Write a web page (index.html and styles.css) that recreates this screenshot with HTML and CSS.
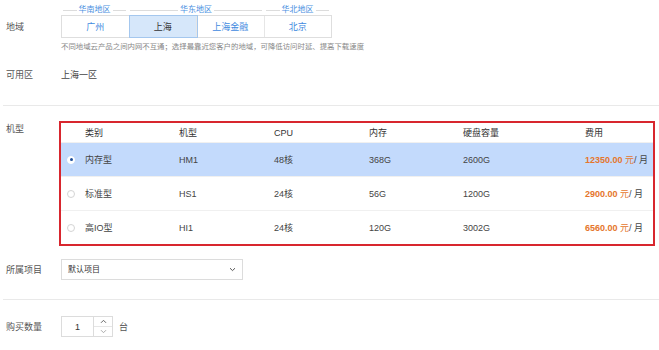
FILE: index.html
```html
<!DOCTYPE html>
<html>
<head>
  <meta charset="UTF-8">
  <title>购买云服务器</title>
  <link rel="stylesheet" href="styles.css">
</head>
<body>
  <div class="field field-region">
    <div class="field-label label-region">地域</div>
    <div class="field-body">
      <div class="region-groups">
        <div class="region-group w1"><span class="rule"></span><span class="region-name">华南地区</span><span class="rule"></span></div>
        <div class="region-group w2"><span class="rule"></span><span class="region-name">华东地区</span><span class="rule"></span></div>
        <div class="region-group w1"><span class="rule"></span><span class="region-name">华北地区</span><span class="rule"></span></div>
      </div>
      <div class="tabs">
        <div class="tab">广州</div>
        <div class="tab active">上海</div>
        <div class="tab">上海金融</div>
        <div class="tab">北京</div>
      </div>
      <p class="hint">不同地域云产品之间内网不互通；选择最靠近您客户的地域，可降低访问时延、提高下载速度</p>
    </div>
  </div>

  <div class="field field-zone">
    <div class="field-label">可用区</div>
    <div class="field-body">上海一区</div>
  </div>

  <div class="divider divider-1"></div>

  <div class="field field-model">
    <div class="field-label label-model">机型</div>
    <div class="field-body">
      <div class="model-table">
        <div class="row head">
          <div class="cell first">类别</div>
          <div class="cell">机型</div>
          <div class="cell">CPU</div>
          <div class="cell">内存</div>
          <div class="cell">硬盘容量</div>
          <div class="cell">费用</div>
        </div>
        <div class="row selected">
          <div class="cell first"><span class="radio checked"></span>内存型</div>
          <div class="cell">HM1</div>
          <div class="cell">48核</div>
          <div class="cell">368G</div>
          <div class="cell">2600G</div>
          <div class="cell"><b class="price">12350.00</b> <span class="yuan">元</span>/ 月</div>
        </div>
        <div class="row">
          <div class="cell first"><span class="radio"></span>标准型</div>
          <div class="cell">HS1</div>
          <div class="cell">24核</div>
          <div class="cell">56G</div>
          <div class="cell">1200G</div>
          <div class="cell"><b class="price">2900.00</b> <span class="yuan">元</span>/ 月</div>
        </div>
        <div class="row last">
          <div class="cell first"><span class="radio"></span>高IO型</div>
          <div class="cell">HI1</div>
          <div class="cell">24核</div>
          <div class="cell">120G</div>
          <div class="cell">3002G</div>
          <div class="cell"><b class="price">6560.00</b> <span class="yuan">元</span>/ 月</div>
        </div>
      </div>
    </div>
  </div>

  <div class="field field-project">
    <div class="field-label label-box">所属项目</div>
    <div class="field-body">
      <div class="select">
        <span>默认项目</span>
        <svg class="chevron" width="7" height="5" viewBox="0 0 7 5"><path d="M1 1.2 L3.5 3.6 L6 1.2" fill="none" stroke="#555" stroke-width="1"/></svg>
      </div>
    </div>
  </div>

  <div class="divider divider-2"></div>

  <div class="field field-count">
    <div class="field-label label-box">购买数量</div>
    <div class="field-body count-body">
      <div class="stepper">
        <div class="stepper-value">1</div>
        <div class="stepper-btns">
          <div class="step"><svg width="7" height="5" viewBox="0 0 7 5"><path d="M1 3.8 L3.5 1.3 L6 3.8" fill="none" stroke="#666" stroke-width="1"/></svg></div>
          <div class="step down"><svg width="7" height="5" viewBox="0 0 7 5"><path d="M1 1.2 L3.5 3.7 L6 1.2" fill="none" stroke="#aaa" stroke-width="1"/></svg></div>
        </div>
      </div>
      <span class="unit">台</span>
    </div>
  </div>
</body>
</html>
```

FILE: styles.css
```css
body {
  margin: 0;
  font-family: "Liberation Sans", "Noto Sans CJK SC", sans-serif;
  font-size: 9px;
  line-height: 12px;
  color: #444;
  background: #fff;
}
.field {
  display: flex;
  padding-left: 6px;
}
.field-label {
  width: 55px;
  flex-shrink: 0;
  color: #555;
}
.field-region {
  margin-top: 5px;
}
.label-region {
  padding-top: 16px;
}
.region-groups {
  display: flex;
  height: 10px;
}
.region-group {
  display: flex;
  align-items: center;
  padding: 0 2px;
  box-sizing: border-box;
}
.region-group.w1 {
  width: 67px;
}
.region-group.w2 {
  width: 136px;
}
.rule {
  flex: 1;
  height: 1px;
  background: #dcdcdc;
}
.region-name {
  color: #4a8fdf;
  font-size: 8px;
  line-height: 10px;
  padding: 0 2px;
}
.tabs {
  display: flex;
  width: 271px;
  height: 23px;
  border: 1px solid #dedede;
  box-sizing: border-box;
}
.tab {
  width: 68px;
  display: flex;
  align-items: center;
  justify-content: center;
  color: #3f8ae0;
  border-right: 1px solid #e6e6e6;
}
.tab:last-child {
  border-right: none;
}
.tab.active {
  background: #d6e7fa;
  outline: 1px solid #a4c7ee;
  color: #333;
}
.hint {
  margin: 3px 0 0;
  font-size: 7.4px;
  color: #888;
}
.field-zone {
  margin-top: 16px;
}
.divider {
  height: 1px;
  background: #e9e9e9;
  margin: 0 0 0 3px;
}
.divider-1 {
  margin-top: 24px;
}
.divider-2 {
  margin-top: 19px;
}
.field-model {
  margin-top: 15px;
}
.label-model {
  padding-top: 2px;
}
.model-table {
  width: 596px;
  margin-left: -2px;
  border: 2px solid #d8262e;
  box-sizing: border-box;
}
.row {
  display: grid;
  grid-template-columns: 118px 95px 95px 94px 122px 1fr;
  align-items: center;
  height: 34px;
  border-bottom: 1px solid #f0f0f0;
  box-sizing: border-box;
}
.row.head {
  height: 20px;
  color: #333;
}
.row.last {
  height: 33px;
  border-bottom: none;
}
.row.selected {
  background: #c3dafc;
}
.cell.first {
  position: relative;
  padding-left: 24px;
}
.radio {
  position: absolute;
  left: 6px;
  top: 2px;
  width: 8px;
  height: 8px;
  border: 1px solid #d4d4d4;
  border-radius: 50%;
  background: #fff;
  box-sizing: border-box;
}
.radio.checked {
  border-color: #fff;
}
.radio.checked::after {
  content: "";
  position: absolute;
  left: 1.5px;
  top: 1.5px;
  width: 3px;
  height: 3px;
  border-radius: 50%;
  background: #1f4f9a;
}
.price {
  color: #e5762c;
  font-weight: bold;
}
.yuan {
  color: #e5762c;
}
.field-project {
  margin-top: 13px;
}
.label-box {
  padding-top: 5px;
}
.select {
  display: flex;
  align-items: center;
  justify-content: space-between;
  width: 182px;
  height: 21px;
  padding: 0 6px;
  border: 1px solid #dcdcdc;
  box-sizing: border-box;
  font-size: 8px;
  color: #333;
}
.field-count {
  margin-top: 16px;
}
.count-body {
  display: flex;
  align-items: center;
}
.stepper {
  display: flex;
  width: 52px;
  height: 21px;
  border: 1px solid #dcdcdc;
  box-sizing: border-box;
}
.stepper-value {
  width: 31px;
  display: flex;
  align-items: center;
  justify-content: center;
  color: #333;
  border-right: 1px solid #dcdcdc;
}
.stepper-btns {
  flex: 1;
  display: flex;
  flex-direction: column;
}
.step {
  flex: 1;
  display: flex;
  align-items: center;
  justify-content: center;
}
.step.down {
  border-top: 1px solid #e6e6e6;
}
.unit {
  margin-left: 6px;
  color: #555;
}
```
